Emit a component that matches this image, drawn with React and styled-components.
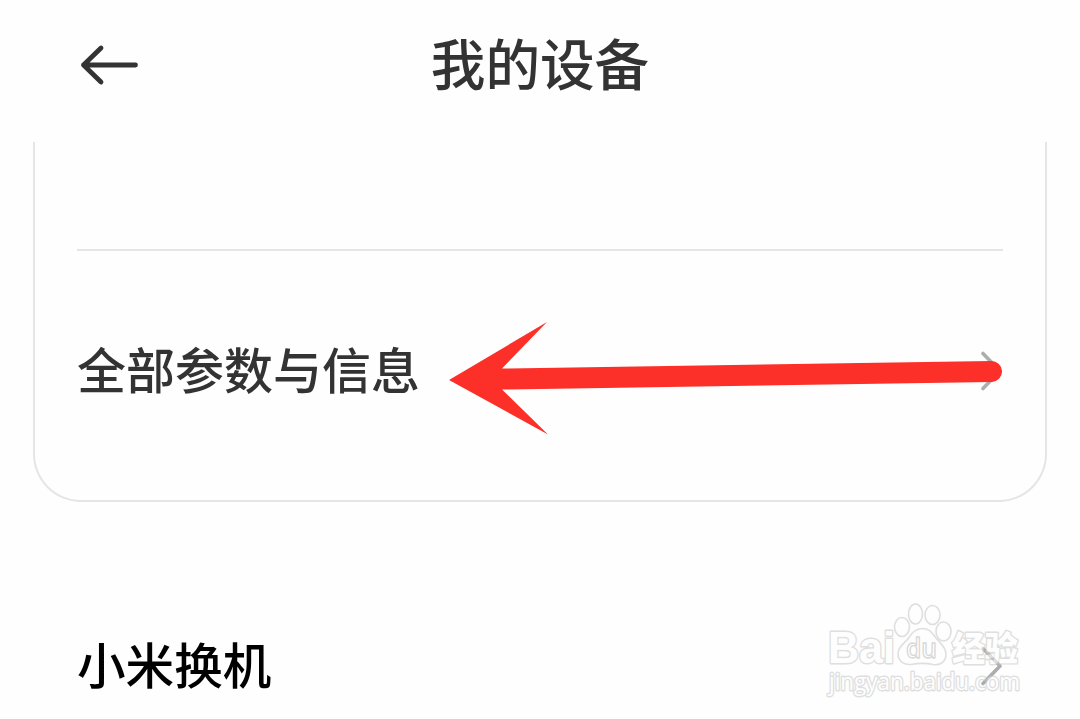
import React from "react";
import styled, { createGlobalStyle } from "styled-components";

const cards = [{ id: "params", title: "全部参数与信息" }];

function BackIcon() {
  return (
    <svg width="60" height="44" viewBox="0 0 60 44" fill="none">
      <path
        d="M23 5L5.5 22L23 39M5.5 22H57.5"
        stroke="#333333"
        strokeWidth="4.8"
        strokeLinecap="round"
        strokeLinejoin="round"
      />
    </svg>
  );
}

function Chevron() {
  return (
    <svg width="24" height="42" viewBox="0 0 24 42" fill="none">
      <path
        d="M4 2.5L21 20L4 37.5"
        stroke="#adadad"
        strokeWidth="3.6"
        strokeLinecap="round"
        strokeLinejoin="round"
      />
    </svg>
  );
}

function Arrow() {
  return (
    <ArrowLayer width="560" height="120" viewBox="445 318 560 120">
      <path
        d="M449 380L547 322L502 368.5L991 361A10.5 10.5 0 0 1 992 382L502 389.5L548 434.5Z"
        fill="#fc3029"
      />
    </ArrowLayer>
  );
}

function Watermark() {
  return (
    <WatermarkLayer width="204" height="100" viewBox="822 600 204 100">
      <Outline>
        <LogoText x="828" y="663" textLength="67" lengthAdjust="spacingAndGlyphs">
          Bai
        </LogoText>
        <Paw>
          <ellipse cx="902" cy="627" rx="7.5" ry="9.5" />
          <ellipse cx="915.5" cy="614" rx="7" ry="10" />
          <ellipse cx="932.5" cy="615" rx="7.5" ry="9.5" />
          <ellipse cx="943.5" cy="631.5" rx="7.5" ry="9.5" />
          <path d="M922 628.5C914 628.5 911 635 907 640C902 645 898 648 898 654C898 661 904 665 911 664.5C919 663 926 663 933 664.5C941 666 946 661 946 654C946 647 940 643 936 638C932 633 930 628.5 922 628.5Z" />
        </Paw>
        <DuText x="906" y="658" textLength="31" lengthAdjust="spacingAndGlyphs">
          du
        </DuText>
        <CnText x="952" y="661" textLength="66" lengthAdjust="spacingAndGlyphs">
          经验
        </CnText>
        <UrlText x="829" y="690" textLength="191" lengthAdjust="spacingAndGlyphs">
          jingyan.baidu.com
        </UrlText>
      </Outline>
    </WatermarkLayer>
  );
}

function App() {
  return (
    <Page>
      <GlobalStyle />
      <Header>
        <BackButton aria-label="返回">
          <BackIcon />
        </BackButton>
        <Title>我的设备</Title>
      </Header>
      <Card>
        <CardTop />
        {cards.map((item) => (
          <CardRow key={item.id}>
            <Label $color="#333333">{item.title}</Label>
            <Chevron />
          </CardRow>
        ))}
      </Card>
      <Row>
        <Label $color="#000000" $size="48.6px">
          小米换机
        </Label>
        <Chevron />
      </Row>
      <Arrow />
      <Watermark />
    </Page>
  );
}

export default App;

const GlobalStyle = createGlobalStyle`
  * {
    box-sizing: border-box;
  }

  body {
    margin: 0;
    background: #fefefe;
    font-family: "Noto Sans CJK SC", sans-serif;
  }
`;

const Page = styled.div`
  position: relative;
  width: 1080px;
  height: 719px;
  overflow: hidden;
  background: #fefefe;
`;

const Header = styled.header`
  display: grid;
  grid-template-columns: 1fr auto 1fr;
  align-items: center;
  height: 142px;
  padding: 0 78px 12px;
`;

const BackButton = styled.button`
  display: flex;
  justify-self: start;
  padding: 0;
  border: none;
  background: none;
`;

const Title = styled.h1`
  margin: 0;
  padding-bottom: 6px;
  color: #333333;
  font-size: 54.6px;
  font-weight: 500;
  line-height: 80px;
`;

const Card = styled.section`
  height: 360px;
  margin: 0 33px;
  padding: 0 42px;
  border: 2px solid #e5e5e5;
  border-top: none;
  border-radius: 0 0 48px 48px;
`;

const CardTop = styled.div`
  height: 109px;
  border-bottom: 2px solid #e5e5e5;
`;

const CardRow = styled.div`
  display: flex;
  align-items: center;
  justify-content: space-between;
  height: 241px;
`;

const Row = styled.div`
  display: flex;
  align-items: center;
  justify-content: space-between;
  height: 241px;
  margin-top: 44px;
  padding: 0 77px;
`;

const Label = styled.span`
  padding-bottom: 7px;
  color: ${({ $color }) => $color};
  font-size: ${({ $size }) => $size || "49px"};
  font-weight: 500;
  line-height: 72px;
`;

const ArrowLayer = styled.svg`
  position: absolute;
  top: 318px;
  left: 445px;
`;

const WatermarkLayer = styled.svg`
  position: absolute;
  top: 600px;
  left: 822px;
`;

const Outline = styled.g`
  fill: #ffffff;
  stroke: #cbcbcb;
  stroke-width: 2.8px;
  stroke-linejoin: round;
  paint-order: stroke;
  opacity: 0.6;
`;

const Paw = styled.g`
  stroke-width: 1.6px;
  paint-order: normal;
`;

const LogoText = styled.text`
  font: bold 44px "Liberation Sans", sans-serif;
`;

const DuText = styled.text`
  font: 600 27px "Open Sans", sans-serif;
  stroke: #c0c0c0;
  stroke-width: 1.4px;
  paint-order: normal;
`;

const CnText = styled.text`
  font: 900 34px "Noto Sans CJK SC", sans-serif;
`;

const UrlText = styled.text`
  font: 23px "Open Sans", sans-serif;
`;
